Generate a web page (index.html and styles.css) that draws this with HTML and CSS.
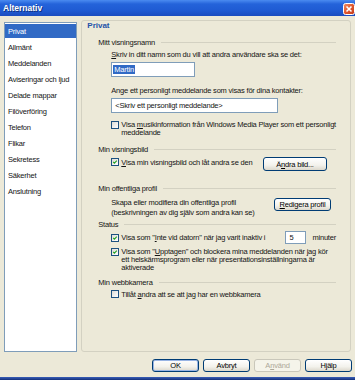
FILE: index.html
```html
<!DOCTYPE html>
<html lang="sv">
  <head>
    <meta charset="UTF-8" />
    <title>Alternativ</title>
    <link rel="stylesheet" href="styles.css">
  </head>
  <body>
    <div class="window">
      <div class="titlebar">
        <span class="title">Alternativ</span>
        <svg class="close" width="12" height="12" viewBox="0 0 12 12">
          <defs>
            <linearGradient id="cg" x1="0" y1="0" x2="1" y2="1">
              <stop offset="0" stop-color="#f0916a" />
              <stop offset="0.5" stop-color="#e0582e" />
              <stop offset="1" stop-color="#c0381a" />
            </linearGradient>
          </defs>
          <rect x="0.5" y="0.5" width="11" height="11" rx="2" fill="url(#cg)" stroke="#fff" />
          <path d="M3.5 3.5 L8.5 8.5 M8.5 3.5 L3.5 8.5" stroke="#fff" stroke-width="1.6" />
        </svg>
      </div>

      <div class="main">
        <ul class="nav">
          <li class="active">Privat</li>
          <li>Allmänt</li>
          <li>Meddelanden</li>
          <li>Aviseringar och ljud</li>
          <li>Delade mappar</li>
          <li>Filöverföring</li>
          <li>Telefon</li>
          <li>Flikar</li>
          <li>Sekretess</li>
          <li>Säkerhet</li>
          <li>Anslutning</li>
        </ul>

        <div class="panel">
          <div class="panel-title">Privat</div>

          <!-- Mitt visningsnamn -->
          <div class="group-head mt8">Mitt visningsnamn</div>
          <div class="indent text mt3"><u>S</u>kriv in ditt namn som du vill att andra användare ska se det:</div>
          <div class="indent field name-field mt3"><span class="selected">Martin</span></div>
          <div class="indent text mt9">Ange ett personligt meddelande som visas för dina kontakter:</div>
          <div class="indent field msg-field mt3">&lt;Skriv ett personligt meddelande&gt;</div>
          <div class="indent check-row tight mt8">
            <span class="box"></span>
            <span>Visa <u>m</u>usikinformation från Windows Media Player som ett personligt<br>meddelande</span>
          </div>

          <!-- Min visningsbild -->
          <div class="group-head mt8">Min visningsbild</div>
          <div class="indent row mt3">
            <div class="check-row pic-check">
              <span class="box on"><svg viewBox="0 0 8 8"><path d="M1.6 3.8 L3.2 5.5 L6.4 2.2" /></svg></span>
              <span><u>V</u>isa min visningsbild och låt andra se den</span>
            </div>
            <button class="btn pic-btn">Ä<u>n</u>dra bild...</button>
          </div>

          <!-- Min offentliga profil -->
          <div class="group-head mt13">Min offentliga profil</div>
          <div class="indent row mt5">
            <div class="text wide">Skapa eller modifiera din offentliga profil<br>(beskrivningen av dig själv som andra kan se)</div>
            <button class="btn profile-btn"><u>R</u>edigera profil</button>
          </div>

          <!-- Status -->
          <div class="group-head mt2">Status</div>
          <div class="indent row idle-row mt2">
            <div class="check-row">
              <span class="box on"><svg viewBox="0 0 8 8"><path d="M1.6 3.8 L3.2 5.5 L6.4 2.2" /></svg></span>
              <span>Visa som &quot;<u>I</u>nte vid datorn&quot; när jag varit inaktiv i</span>
            </div>
            <div class="field minutes">5</div>
            <span class="unit">minuter</span>
          </div>
          <div class="indent check-row tight mt4">
            <span class="box on"><svg viewBox="0 0 8 8"><path d="M1.6 3.8 L3.2 5.5 L6.4 2.2" /></svg></span>
            <span>Visa som &quot;<u>U</u>pptagen&quot; och blockera mina meddelanden när jag kör<br>ett helskärmsprogram eller när presentationsinställningarna är<br>aktiverade</span>
          </div>

          <!-- Min webbkamera -->
          <div class="group-head mt6">Min webbkamera</div>
          <div class="indent check-row mt3">
            <span class="box"></span>
            <span>Tillåt <u>a</u>ndra att se att jag har en webbkamera</span>
          </div>
        </div>
      </div>

      <div class="footer">
        <button class="btn default">OK</button>
        <button class="btn">Avbryt</button>
        <button class="btn" disabled>A<u>n</u>vänd</button>
        <button class="btn">Hjälp</button>
      </div>
      <div class="frame-bottom"></div>
    </div>
  </body>
</html>
```

FILE: styles.css
```css
* {
  box-sizing: border-box;
}
body {
  margin: 0;
  background-color: #ece9d8;
  font-family: "Liberation Sans", Arial, sans-serif;
  font-size: 7.5px;
  letter-spacing: -0.2px;
  color: #141414;
}
.window {
  width: 355px;
  height: 380px;
  display: flex;
  flex-direction: column;
  overflow: hidden;
}
.titlebar {
  height: 16px;
  display: flex;
  align-items: center;
  justify-content: space-between;
  padding-left: 3px;
  background: linear-gradient(#4a8bf0 0%, #2463da 25%, #1f5bd3 65%, #1a4cbf 100%);
}
.title {
  color: #ffffff;
  font-weight: bold;
  font-size: 8.5px;
  letter-spacing: 0;
  text-shadow: 1px 1px 0 #10307c;
}
.close {
  display: block;
  margin-top: 2px;
  margin-right: 0;
}
.main {
  display: flex;
  gap: 4px;
  padding: 4px 4px 0 4px;
}
.nav {
  width: 80px;
  height: 330px;
  margin: 2px 0 0;
  padding: 1px 0 0;
  list-style: none;
  background-color: #ffffff;
  border: 1px solid #7f9db9;
}
.nav li {
  height: 14px;
  line-height: 16px;
  margin-bottom: 2px;
  padding-left: 3px;
  white-space: nowrap;
}
.nav li.active {
  background-color: #316ac5;
  color: #ffffff;
}
.panel {
  flex: 1;
  height: 332px;
  border: 1px solid #d3d1c2;
  border-radius: 3px;
  padding: 0 14px 0 16px;
}
.panel-title {
  line-height: 9px;
  margin-left: -11px;
  font-size: 8px;
  font-weight: bold;
  letter-spacing: 0;
  color: #2352a8;
}
.group-head {
  display: flex;
  align-items: center;
  line-height: 9px;
  white-space: nowrap;
}
.group-head::after {
  content: "";
  flex: 1;
  height: 1px;
  margin-left: 6px;
  background-color: #d3d1c2;
}
.indent {
  margin-left: 13px;
}
.text {
  line-height: 9px;
  white-space: nowrap;
}
.wide {
  line-height: 10px;
}
.field {
  height: 15px;
  padding: 0 1px;
  line-height: 13px;
  border: 1px solid #7f9db9;
  background-color: #ffffff;
  white-space: nowrap;
}
.name-field {
  width: 84px;
}
.msg-field {
  width: 167px;
  padding-left: 3px;
}
.selected {
  background-color: #316ac5;
  color: #ffffff;
  padding: 0 1px;
}
.row {
  display: flex;
  align-items: flex-start;
}
.check-row {
  display: flex;
  align-items: flex-start;
  gap: 2px;
  line-height: 9px;
  white-space: nowrap;
}
.check-row.tight {
  line-height: 8px;
}
.pic-check {
  padding-top: 1px;
}
.box {
  flex: none;
  width: 8px;
  height: 8px;
  border: 1px solid #1c5180;
  background: linear-gradient(135deg, #dcdcd6, #ffffff);
}
.tight .box {
  margin-top: 0;
}
.box svg {
  display: block;
  width: 6px;
  height: 6px;
}
.box svg path {
  fill: none;
  stroke: #21a121;
  stroke-width: 1.4;
}
.btn {
  height: 14px;
  padding: 0;
  font-family: inherit;
  font-size: 7.5px;
  letter-spacing: -0.2px;
  color: #000000;
  border: 1px solid #003c74;
  border-radius: 3px;
  background: linear-gradient(#ffffff, #f3f2ec 60%, #dcd8cc);
}
.btn:disabled {
  color: #aca899;
  border-color: #c9c7ba;
  background: #f5f4ea;
}
.btn.default {
  box-shadow: inset 0 0 0 1px #98b4e4;
}
.pic-btn {
  width: 64px;
  margin-left: auto;
  margin-right: 9px;
}
.profile-btn {
  width: 57px;
  height: 13px;
  margin-left: auto;
  margin-right: 5px;
}
.idle-row {
  align-items: center;
}
.idle-row .check-row {
  align-items: center;
}
.minutes {
  width: 21px;
  height: 13px;
  line-height: 11px;
  padding-left: 3px;
  margin-left: auto;
}
.unit {
  margin-left: 6px;
  white-space: nowrap;
}
.footer {
  display: flex;
  justify-content: flex-end;
  gap: 4px;
  margin-top: 7px;
  padding-right: 3px;
}
.footer .btn {
  width: 47px;
  height: 13px;
}
.frame-bottom {
  margin-top: auto;
  height: 3px;
  background: linear-gradient(#3a5fb8, #142f7a);
}
.mt2 { margin-top: 2px; }
.mt3 { margin-top: 3px; }
.mt4 { margin-top: 4px; }
.mt5 { margin-top: 5px; }
.mt6 { margin-top: 6px; }
.mt8 { margin-top: 8px; }
.mt9 { margin-top: 9px; }
.mt13 { margin-top: 13px; }
```
